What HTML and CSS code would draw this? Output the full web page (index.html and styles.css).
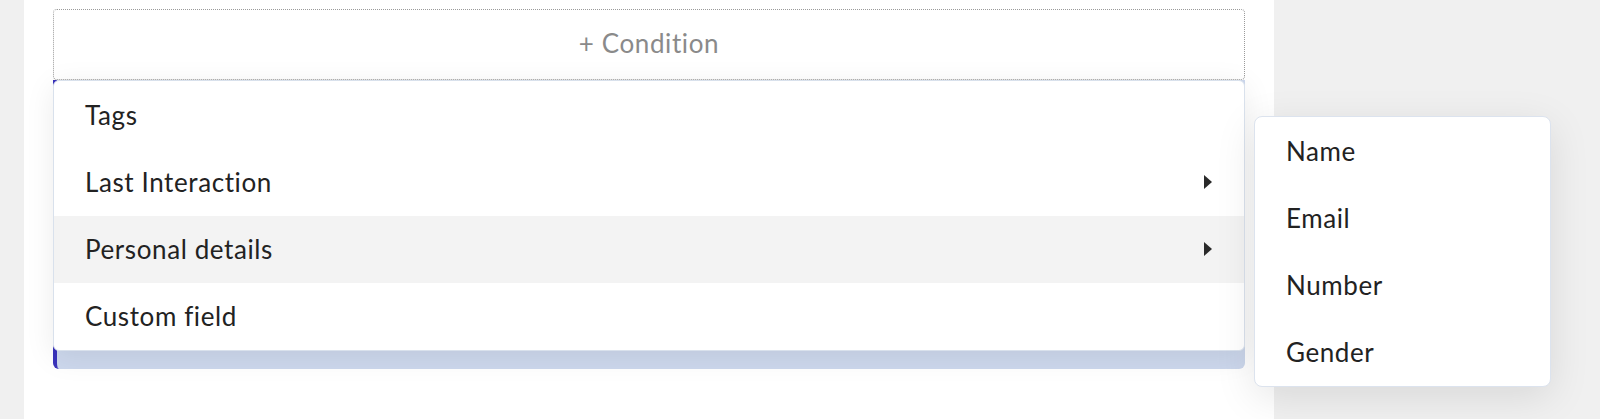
FILE: index.html
```html
<!DOCTYPE html>
<html lang="en">
<head>
  <meta charset="UTF-8" />
  <title>Condition picker</title>
  <link rel="stylesheet" href="styles.css">
</head>
<body>
  <div class="panel">
    <button class="add-condition">+ Condition</button>
    <div class="condition-block"></div>

    <div class="menu">
      <div class="menu-item">Tags</div>
      <div class="menu-item">Last Interaction <span class="caret"></span></div>
      <div class="menu-item active">Personal details <span class="caret"></span></div>
      <div class="menu-item">Custom field</div>
    </div>
  </div>

  <div class="submenu">
    <div class="menu-item">Name</div>
    <div class="menu-item">Email</div>
    <div class="menu-item">Number</div>
    <div class="menu-item">Gender</div>
  </div>
</body>
</html>
```

FILE: styles.css
```css
body {
  margin: 0;
  background: #f0f0f0;
  font-family: 'Lato', 'Noto Sans', sans-serif;
  color: #222;
  height: 419px;
  overflow: hidden;
  position: relative;
}
.panel {
  position: relative;
  width: 1250px;
  height: 419px;
  margin-left: 24px;
  background: #fff;
  padding: 9px 29px 0;
  box-sizing: border-box;
}
.add-condition {
  display: block;
  width: 1192px;
  height: 71px;
  padding: 0 0 4px;
  border: 1px dotted #9a9a9a;
  border-radius: 4px;
  background: #fff;
  font-family: inherit;
  font-size: 26px;
  letter-spacing: 0.6px;
  color: #8a8a8a;
  cursor: pointer;
}
.condition-block {
  width: 1192px;
  height: 289px;
  background: #cdd8ed;
  border-left: 4px solid #3a33bb;
  border-radius: 0 0 6px 6px;
  box-sizing: border-box;
}
.menu {
  position: absolute;
  left: 29px;
  top: 80px;
  width: 1192px;
  background: #fff;
  border: 1px solid #d9e1ec;
  border-radius: 6px;
  box-shadow: 0 6px 30px rgba(0, 0, 0, 0.08);
  overflow: hidden;
  box-sizing: border-box;
}
.menu-item {
  height: 67.25px;
  display: flex;
  align-items: center;
  justify-content: space-between;
  padding: 0 32px 0 31px;
  font-size: 26px;
  letter-spacing: 0.6px;
}
.menu-item.active {
  background: #f3f3f3;
}
.caret {
  width: 0;
  height: 0;
  border-top: 7px solid transparent;
  border-bottom: 7px solid transparent;
  border-left: 8px solid #2a2a2a;
}
.submenu {
  position: absolute;
  left: 1254px;
  top: 116px;
  width: 297px;
  background: #fff;
  border: 1px solid #dce3ee;
  border-radius: 8px;
  box-shadow: 0 10px 40px rgba(0, 0, 0, 0.10);
  box-sizing: border-box;
}
```
